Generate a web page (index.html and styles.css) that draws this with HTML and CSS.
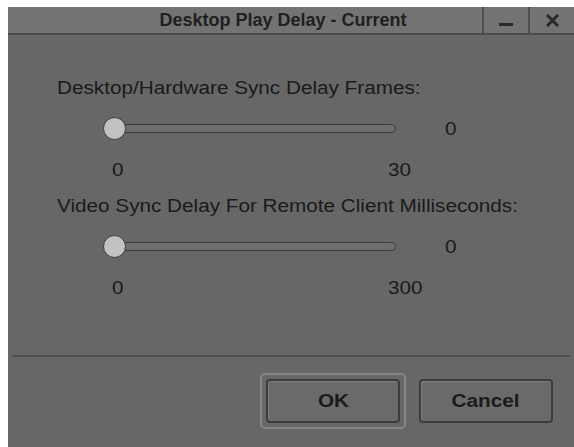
FILE: index.html
```html
<!DOCTYPE html>
<html>
<head>
<meta charset="utf-8">
<link rel="stylesheet" href="styles.css">
</head>
<body>
<div class="dialog">
  <div class="titlebar">
    <div class="title">Desktop Play Delay - Current</div>
    <div class="tb-btn tb-min"><span class="min-bar"></span></div>
    <div class="tb-btn tb-close">
      <svg width="13" height="13" viewBox="0 0 13 13"><path d="M2 2L11 11M11 2L2 11" stroke="#2a2a2a" stroke-width="3" stroke-linecap="square"/></svg>
    </div>
  </div>
  <div class="content">
    <div class="group">
      <div class="label"><span class="wide">Desktop/Hardware Sync Delay Frames:</span></div>
      <div class="slider-row">
        <div class="slider"><div class="track"></div><div class="thumb"></div></div>
        <div class="value"><span class="wide">0</span></div>
      </div>
      <div class="range"><span class="min wide">0</span><span class="max wide">30</span></div>
    </div>
    <div class="group group2">
      <div class="label"><span class="wide">Video Sync Delay For Remote Client Milliseconds:</span></div>
      <div class="slider-row">
        <div class="slider"><div class="track"></div><div class="thumb"></div></div>
        <div class="value"><span class="wide">0</span></div>
      </div>
      <div class="range"><span class="min wide">0</span><span class="max wide">300</span></div>
    </div>
  </div>
  <div class="footer">
    <div class="btn-focus"><button class="btn"><span class="wide">OK</span></button></div>
    <button class="btn btn-cancel"><span class="wide">Cancel</span></button>
  </div>
</div>
</body>
</html>
```

FILE: styles.css
```css
html, body {
  margin: 0;
  padding: 0;
  background: #ffffff;
}
body {
  padding: 7px 0 0 8px;
  font-family: "Liberation Sans", Arial, sans-serif;
  color: #1a1a1a;
}
.dialog {
  width: 566px;
  height: 440px;
  background: #676767;
  display: flex;
  flex-direction: column;
}
/* the dialog's text is drawn slightly wider than plain Arial */
.wide {
  display: inline-block;
  transform: scaleX(1.15);
  transform-origin: left center;
}
.titlebar {
  height: 26px;
  background: #737373;
  border-bottom: 2px solid #4a4a4a;
  display: flex;
  align-items: stretch;
}
.title {
  flex: 1;
  text-align: center;
  font-weight: bold;
  font-size: 18px;
  line-height: 26px;
  padding-left: 76px;
  color: #202020;
}
.tb-btn {
  width: 44px;
  border-left: 2px solid #4e4e4e;
  display: flex;
  align-items: center;
  justify-content: center;
}
.min-bar {
  display: block;
  width: 14px;
  height: 3px;
  background: #2a2a2a;
  margin-top: 8px;
}
.content {
  padding: 0 0 0 49px;
  height: 320px;
}
.group {
  padding-top: 43px;
}
.group2 {
  padding-top: 16px;
}
.label {
  font-size: 18px;
  line-height: 20px;
}
.slider-row {
  display: flex;
  align-items: center;
  margin-top: 18px;
  height: 26px;
}
.slider {
  position: relative;
  width: 293px;
  height: 26px;
  margin-left: 46px;
}
.track {
  position: absolute;
  left: 10px;
  right: 0;
  top: 8px;
  height: 7px;
  border: 1.5px solid #3a3a3a;
  border-radius: 5px;
  background: #6e6e6e;
}
.thumb {
  position: absolute;
  left: 0;
  top: 1px;
  width: 21px;
  height: 21px;
  border-radius: 50%;
  background: #c2c2c2;
  border: 1.5px solid #3c3c3c;
}
.value {
  font-size: 18px;
  margin-left: 49px;
}
.range {
  display: flex;
  margin-left: 55px;
  margin-top: 18px;
  font-size: 18px;
  line-height: 20px;
}
.range .max {
  margin-left: 266px;
}
.footer {
  border-top: 2px solid #4e4e4e;
  margin: 0 4px;
  flex: 1;
  display: flex;
  justify-content: flex-end;
  align-items: flex-start;
  padding: 22px 17px 0 0;
  gap: 13px;
}
.btn-focus {
  border: 2px solid #858585;
  border-radius: 5px;
  padding: 4px;
  margin-top: -6px;
}
.btn {
  width: 134px;
  height: 44px;
  background: #6a6a6a;
  border: 2px solid #3c3c3c;
  border-radius: 4px;
  box-shadow: inset 1px 1px 0 #7c7c7c;
  font-family: "Liberation Sans", Arial, sans-serif;
  font-weight: bold;
  font-size: 18px;
  color: #1a1a1a;
  display: flex;
  align-items: center;
  justify-content: center;
  padding: 0;
}
.btn .wide {
  transform-origin: center;
}
```
